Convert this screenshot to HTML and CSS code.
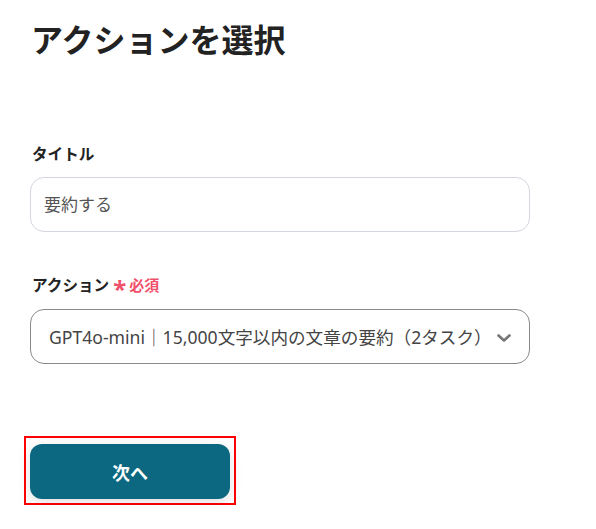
FILE: index.html
```html
<!DOCTYPE html>
<html lang="ja">
<head>
    <meta charset="UTF-8">
    <meta name="viewport" content="width=device-width, initial-scale=1.0">
    <title>アクションを選択</title>
    <link rel="stylesheet" href="styles.css">
</head>
<body>
    <main class="panel">
        <h1 class="page-title">アクションを選択</h1>

        <div class="field field-title">
            <label class="field-label" for="title-input">タイトル</label>
            <div class="text-box" id="title-input">要約する</div>
        </div>

        <div class="field field-action">
            <label class="field-label">アクション<span class="required"><span class="mark">*</span>必須</span></label>
            <div class="select-box">
                <span class="select-value">GPT4o-mini｜15,000文字以内の文章の要約（2タスク）</span>
                <svg class="chevron" width="16" height="10" viewBox="0 0 16 10" aria-hidden="true">
                    <path d="M2.5 2.5 L8 7.5 L13.5 2.5" fill="none" stroke="#757575" stroke-width="2.6" stroke-linecap="round" stroke-linejoin="round"/>
                </svg>
            </div>
        </div>

        <div class="actions">
            <div class="highlight">
                <button class="next-btn">次へ</button>
            </div>
        </div>
    </main>
</body>
</html>
```

FILE: styles.css
```css
body {
    margin: 0;
    padding: 0;
    background: #ffffff;
    color: #222222;
    font-family: "Noto Sans", "Noto Sans CJK JP", sans-serif;
}
.panel {
    width: 500px;
    padding: 16px 0 0 30px;
}
.page-title {
    margin: 0 0 0 1px;
    font-size: 32px;
    line-height: 48px;
    font-weight: 700;
    color: #222222;
}
.field-title {
    margin-top: 78px;
}
.field-action {
    margin-top: 41px;
}
.field-label {
    display: flex;
    align-items: center;
    margin-left: 2px;
    font-size: 15.6px;
    line-height: 24px;
    font-weight: 700;
    color: #222222;
}
.required {
    display: flex;
    align-items: center;
    margin-left: 4px;
    font-size: 15px;
    font-weight: 700;
    color: #f0506a;
}
.mark {
    font-size: 24px;
    line-height: 14px;
    margin-right: 3px;
    padding-top: 7px;
}
.text-box {
    margin-top: 11px;
    box-sizing: border-box;
    height: 55px;
    border: 1px solid #d3d7de;
    border-radius: 14px;
    padding: 0 13px 3px 13px;
    display: flex;
    align-items: center;
    font-size: 17px;
    color: #555555;
}
.field-action .select-box {
    margin-top: 12px;
}
.select-box {
    height: 55px;
    box-sizing: border-box;
    border: 1px solid #8a8a8a;
    border-radius: 14px;
    padding: 0 17px 0 18px;
    display: flex;
    align-items: center;
    justify-content: space-between;
}
.select-value {
    font-size: 17.6px;
    color: #444444;
    white-space: nowrap;
}
.chevron {
    flex: none;
    margin-top: 2px;
}
.actions {
    margin-top: 80px;
}
.highlight {
    display: inline-block;
    margin-left: -6px;
    margin-top: -8px;
    padding: 6px 4px 4px 4px;
    border: 2px solid #ff0000;
}
.next-btn {
    display: block;
    width: 200px;
    height: 55px;
    border: none;
    border-radius: 12px;
    background: #0b6880;
    color: #ffffff;
    font-family: "Noto Sans", "Noto Sans CJK JP", sans-serif;
    font-size: 18px;
    font-weight: 700;
    box-shadow: 0 4px 14px rgba(0, 0, 0, 0.12);
    cursor: pointer;
}
```
